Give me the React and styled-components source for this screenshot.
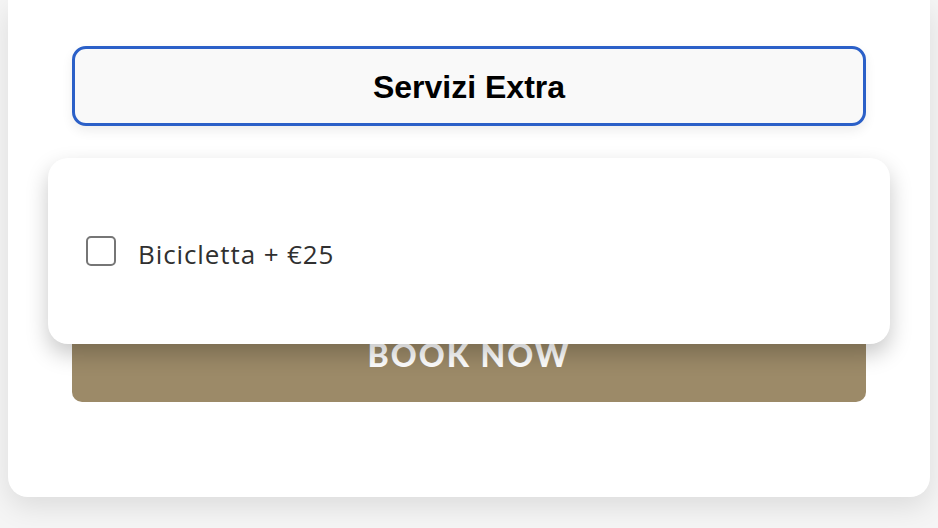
import React from "react";
import styled, { createGlobalStyle } from "styled-components";

const Global = createGlobalStyle`
  html, body { margin: 0; padding: 0; background: #f5f5f5; }
  body { width: 938px; height: 528px; overflow: hidden; }
`;

const Card = styled.div`
  margin: 0 8px;
  background: #ffffff;
  border-radius: 0 0 20px 20px;
  box-shadow: 0 10px 28px rgba(0, 0, 0, 0.1);
  padding: 46px 64px 95px;
  display: flex;
  flex-direction: column;
`;

const Section = styled.div`
  position: relative;
  display: flex;
  flex-direction: column;
`;

const Toggle = styled.button`
  height: 80px;
  box-sizing: border-box;
  border: 3px solid #2b60c8;
  border-radius: 14px;
  background: #f9f9f9;
  box-shadow: 0 5px 12px rgba(0, 0, 0, 0.07);
  font-family: "Liberation Sans", Arial, sans-serif;
  font-weight: 700;
  font-size: 32px;
  color: #000;
  padding: 2px 0 0;
  cursor: pointer;
`;

const Dropdown = styled.div`
  position: absolute;
  top: 112px;
  left: -24px;
  right: -24px;
  height: 186px;
  background: #ffffff;
  border-radius: 20px;
  box-shadow: 0 10px 22px rgba(0, 0, 0, 0.22);
  display: flex;
  align-items: center;
  padding: 0 38px;
  box-sizing: border-box;
  z-index: 2;
`;

const Option = styled.label`
  display: flex;
  align-items: center;
  gap: 22px;
  font-family: "Open Sans", "Noto Sans", sans-serif;
  font-size: 26px;
  letter-spacing: 0.9px;
  color: #303030;
  cursor: pointer;
  padding-top: 5px;
`;

const Box = styled.span`
  width: 30px;
  height: 30px;
  box-sizing: border-box;
  border: 2.5px solid #767676;
  border-radius: 5px;
  background: #fff;
  margin-top: -6px;
`;

const BookButton = styled.button`
  margin-top: 180px;
  height: 96px;
  border: none;
  border-radius: 10px;
  background: #9c8a68;
  color: #ffffff;
  font-family: "Lato", "Open Sans", sans-serif;
  font-weight: 900;
  font-size: 32px;
  letter-spacing: 2px;
  padding: 0;
  cursor: pointer;
`;

export default function App() {
  return (
    <>
      <Global />
      <Card>
        <Section>
          <Toggle>Servizi Extra</Toggle>
          <Dropdown>
            <Option>
              <Box />
              Bicicletta + €25
            </Option>
          </Dropdown>
        </Section>
        <BookButton>BOOK NOW</BookButton>
      </Card>
    </>
  );
}
